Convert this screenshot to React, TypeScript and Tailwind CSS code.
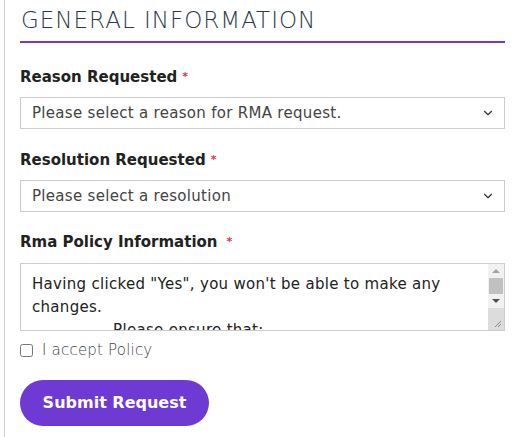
import { ChevronDown } from 'lucide-react'

const policyText = `Having clicked "Yes", you won't be able to make any changes.
                Please ensure that:
                - the items are unused
                - the items are in original packaging`

function Label({ text, gap }: { text: string; gap?: boolean }) {
  return (
    <label className="block text-[15px] font-semibold text-[#222] leading-5">
      {text}
      <span className={`text-[#e0314b] text-[11px] align-top ${gap ? 'ml-[9px]' : 'ml-[5px]'}`}>*</span>
    </label>
  )
}

function Select({ placeholder }: { placeholder: string }) {
  return (
    <div className="mt-[10px] flex items-center justify-between h-[32px] border border-[#cccccc] bg-white pl-[11px] pr-[9px]">
      <span className="text-[15px] tracking-[0.3px] text-[#444]">{placeholder}</span>
      <ChevronDown className="w-[14px] h-[14px] text-[#333]" strokeWidth={2} />
    </div>
  )
}

// classic scrollbar look, drawn beside the text
function FakeScrollbar() {
  return (
    <div className="w-[16px] flex flex-col bg-[#f1f1f1]">
      <div className="h-[14px] flex items-center justify-center">
        <div className="w-0 h-0 border-l-[4px] border-r-[4px] border-b-[4px] border-l-transparent border-r-transparent border-b-[#a3a3a3]" />
      </div>
      <div className="mx-[1px] h-[16px] bg-[#c1c1c1]" />
      <div className="h-[14px] flex items-center justify-center">
        <div className="w-0 h-0 border-l-[4px] border-r-[4px] border-t-[4px] border-l-transparent border-r-transparent border-t-[#505050]" />
      </div>
      <div className="flex-1 bg-[#dcdcdc] flex items-end justify-end p-[2px]">
        <svg width="8" height="8" viewBox="0 0 8 8">
          <path d="M7 1 L1 7 M7 4 L4 7" stroke="#8a8a8a" strokeWidth="1" />
        </svg>
      </div>
    </div>
  )
}

export default function App() {
  return (
    <div
      className="w-[517px] h-[437px] bg-white pl-1 overflow-hidden"
      style={{ fontFamily: '"DejaVu Sans", "Liberation Sans", sans-serif' }}
    >
      <div className="h-full border-l border-[#cfcfcf] pl-[15px] pr-[12px]">
        {/* Header */}
        <div className="pt-[6px] pb-[7px] border-b-2 border-[#6e3ad3]">
          <h2 className="text-[23px] font-extralight tracking-[1px] text-[#2d3a4a] leading-7 pl-[1px]">
            GENERAL INFORMATION
          </h2>
        </div>

        <div className="mt-[24px]">
          <Label text="Reason Requested" />
          <Select placeholder="Please select a reason for RMA request." />
        </div>

        <div className="mt-[21px]">
          <Label text="Resolution Requested" />
          <Select placeholder="Please select a resolution" />
        </div>

        <div className="mt-[20px]">
          <Label text="Rma Policy Information" gap />
          <div className="mt-[11px] flex h-[68px] border border-[#cccccc]">
            <textarea
              readOnly
              defaultValue={policyText}
              className="flex-1 block px-[11px] py-[9px] text-[15px] tracking-[0.3px] leading-[23px] text-[#222] overflow-hidden resize-none outline-none"
            />
            <FakeScrollbar />
          </div>
        </div>

        <label className="mt-[8px] flex items-center gap-[9px]">
          <input type="checkbox" className="w-[13px] h-[13px] m-0" />
          <span className="text-[15px] font-light tracking-[0.2px] text-[#444]">I accept Policy</span>
        </label>

        <button className="mt-[18px] w-[189px] h-[46px] rounded-full bg-[#6e3ad3] text-white text-[16px] font-bold">
          Submit Request
        </button>
      </div>
    </div>
  )
}
